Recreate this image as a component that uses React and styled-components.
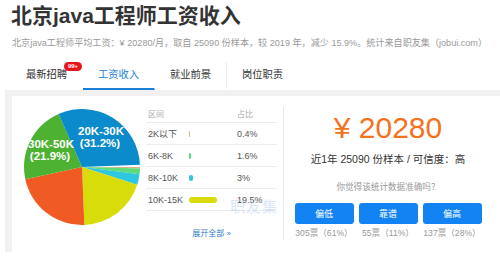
import React from 'react';
import styled, { createGlobalStyle } from 'styled-components';

const GlobalStyle = createGlobalStyle`
  html, body {
    margin: 0;
    padding: 0;
    background: #fff;
  }
  body {
    width: 500px;
    height: 260px;
    overflow: hidden;
    font-family: 'Liberation Sans', 'Noto Sans CJK SC', sans-serif;
    color: #333;
  }
`;

const slices = [
  { label: '2K以下', pct: 0.4, color: '#d6b48a' },
  { label: '6K-8K', pct: 1.6, color: '#5ddb78' },
  { label: '8K-10K', pct: 3, color: '#2fc6e0' },
  { label: '10K-15K', pct: 19.5, color: '#d8dc0a' },
  { label: '15K-20K', pct: 22.4, color: '#ef5b22' },
  { label: '30K-50K', pct: 21.9, color: '#4db232' },
  { label: '20K-30K', pct: 31.2, color: '#0b8bcb' },
];

const tableRows = slices.slice(0, 4);

const votes = [
  { label: '偏低', text: '305票（61%）' },
  { label: '靠谱', text: '55票（11%）' },
  { label: '偏高', text: '137票（28%）' },
];

const Page = styled.div`
  width: 500px;
`;

const Header = styled.header`
  padding-left: 11px;
`;

const Title = styled.h1`
  margin: 0;
  font-size: 21px;
  line-height: 32px;
  font-weight: 700;
  color: #333;
  white-space: nowrap;
`;

const Summary = styled.p`
  margin: 0;
  font-size: 9.1px;
  line-height: 22px;
  color: #999;
  white-space: nowrap;
  padding-left: 1px;
`;

const Tabs = styled.nav`
  display: flex;
  margin-top: 8px;
  padding-left: 11px;
  height: 28px;
`;

const Tab = styled.div`
  position: relative;
  width: 72px;
  box-sizing: border-box;
  text-align: center;
  font-size: 10.3px;
  line-height: 26px;
  color: ${(p) => (p.$active ? '#1b7fd6' : '#333')};
  border-bottom: 2px solid ${(p) => (p.$active ? '#1b7fd6' : 'transparent')};
  border-right: 1px solid ${(p) => (p.$divider ? '#ececec' : 'transparent')};
`;

const Badge = styled.span`
  position: absolute;
  top: 0;
  left: 53px;
  width: 18px;
  height: 9px;
  border-radius: 5px;
  background: #e8141c;
  color: #fff;
  font-family: 'Liberation Sans', sans-serif;
  font-size: 6px;
  font-weight: 700;
  line-height: 9px;
  text-align: center;
`;

const Content = styled.section`
  margin-left: 5px;
  padding: 6px 0 0 7px;
  background: #f1f1f1;
  height: 162px;
  box-sizing: border-box;
`;

const Panel = styled.div`
  display: flex;
  height: 156px;
  background: #fff;
`;

const ChartSide = styled.div`
  position: relative;
  display: flex;
  width: 271px;
  padding-left: 10px;
  box-sizing: border-box;
`;

const PieBox = styled.svg`
  margin-top: 11px;
  flex: none;
`;

const Table = styled.div`
  margin: 9px 0 0 4px;
  width: 131px;
  display: flex;
  flex-direction: column;
`;

const Row = styled.div`
  display: grid;
  grid-template-columns: 41px 48px 1fr;
  align-items: center;
  height: ${(p) => (p.$head ? '18px' : '22px')};
  padding-left: 2px;
  border-bottom: 1px solid #ececec;
  box-sizing: border-box;
  font-size: ${(p) => (p.$head ? '8px' : '9px')};
  color: ${(p) => (p.$head ? '#aaa' : '#555')};
`;

const Bar = styled.span`
  display: block;
  height: 6px;
  border-radius: 3px;
  background: ${(p) => p.$color};
`;

const More = styled.a`
  margin-top: 15px;
  text-align: center;
  font-size: 8px;
  line-height: 16px;
  color: #2f7bc8;
  text-decoration: none;
`;

const Watermark = styled.span`
  position: absolute;
  left: 218px;
  top: 99px;
  font-size: 15px;
  letter-spacing: 1px;
  color: rgba(170, 200, 235, 0.45);
  pointer-events: none;
`;

const ScoreSide = styled.div`
  width: 208px;
  margin: 11px 0 12px;
  border-left: 1px solid #e8e8e8;
  display: flex;
  flex-direction: column;
  align-items: center;
  padding-top: 4px;
`;

const Price = styled.div`
  font-family: 'Liberation Sans', sans-serif;
  font-size: 30px;
  line-height: 34px;
  color: #f4721c;
`;

const Info = styled.div`
  margin-top: 6px;
  font-size: 10.5px;
  line-height: 16px;
  color: #333;
  white-space: nowrap;
`;

const Question = styled.div`
  margin-top: 13px;
  font-size: 8.6px;
  line-height: 14px;
  color: #999;
`;

const Votes = styled.div`
  margin-top: 9px;
  display: grid;
  grid-template-columns: repeat(3, 59px);
  column-gap: 5px;
`;

const Vote = styled.div`
  display: flex;
  flex-direction: column;
  align-items: center;
`;

const VoteButton = styled.button`
  width: 59px;
  height: 21px;
  border: 0;
  border-radius: 3px;
  background: #1383f4;
  color: #fff;
  font-family: inherit;
  font-size: 9px;
  padding: 0;
`;

const VoteCount = styled.span`
  margin-top: 2px;
  font-size: 8.6px;
  line-height: 14px;
  color: #999;
  white-space: nowrap;
`;

const Pie = () => {
  const cx = 60;
  const cy = 60;
  const r = 58;
  let angle = 90;
  const paths = slices.map((s) => {
    const start = angle;
    const end = angle + (s.pct / 100.6) * 360;
    angle = end;
    const a0 = ((start - 90) * Math.PI) / 180;
    const a1 = ((end - 90) * Math.PI) / 180;
    const large = end - start > 180 ? 1 : 0;
    const d = `M${cx} ${cy} L${cx + r * Math.cos(a0)} ${cy + r * Math.sin(a0)} A${r} ${r} 0 ${large} 1 ${cx + r * Math.cos(a1)} ${cy + r * Math.sin(a1)} Z`;
    return <path key={s.label} d={d} fill={s.color} />;
  });
  const labelStyle = {
    fontFamily: "'Liberation Sans', sans-serif",
    fontWeight: 700,
    fontSize: 11.5,
    fill: '#fff',
  };
  return (
    <PieBox width="120" height="120" viewBox="0 0 120 120">
      {paths}
      <g style={labelStyle} textAnchor="middle">
        <text x="79" y="28">20K-30K</text>
        <text x="78" y="39.5">(31.2%)</text>
        <text x="29" y="41">30K-50K</text>
        <text x="28" y="52.5">(21.9%)</text>
      </g>
    </PieBox>
  );
};

const App = () => (
  <Page>
    <GlobalStyle />
    <Header>
      <Title>北京java工程师工资收入</Title>
      <Summary>
        北京java工程师平均工资：¥ 20280/月，取自 25090 份样本，较 2019 年，减少 15.9%。统计来自职友集（jobui.com）
      </Summary>
    </Header>
    <Tabs>
      <Tab>
        最新招聘
        <Badge>99+</Badge>
      </Tab>
      <Tab $active>工资收入</Tab>
      <Tab $divider>就业前景</Tab>
      <Tab>岗位职责</Tab>
    </Tabs>
    <Content>
      <Panel>
        <ChartSide>
          <Pie />
          <Table>
            <Row $head>
              <span>区间</span>
              <span />
              <span>占比</span>
            </Row>
            {tableRows.map((row) => (
              <Row key={row.label}>
                <span>{row.label}</span>
                <Bar $color={row.color} style={{ width: Math.max(1, row.pct * 1.44) }} />
                <span>{row.pct}%</span>
              </Row>
            ))}
            <More href="#">展开全部 »</More>
          </Table>
          <Watermark>职友集</Watermark>
        </ChartSide>
        <ScoreSide>
          <Price>¥ 20280</Price>
          <Info>近1年 25090 份样本 / 可信度：高</Info>
          <Question>你觉得该统计数据准确吗？</Question>
          <Votes>
            {votes.map((v) => (
              <Vote key={v.label}>
                <VoteButton>{v.label}</VoteButton>
                <VoteCount>{v.text}</VoteCount>
              </Vote>
            ))}
          </Votes>
        </ScoreSide>
      </Panel>
    </Content>
  </Page>
);

export default App;
